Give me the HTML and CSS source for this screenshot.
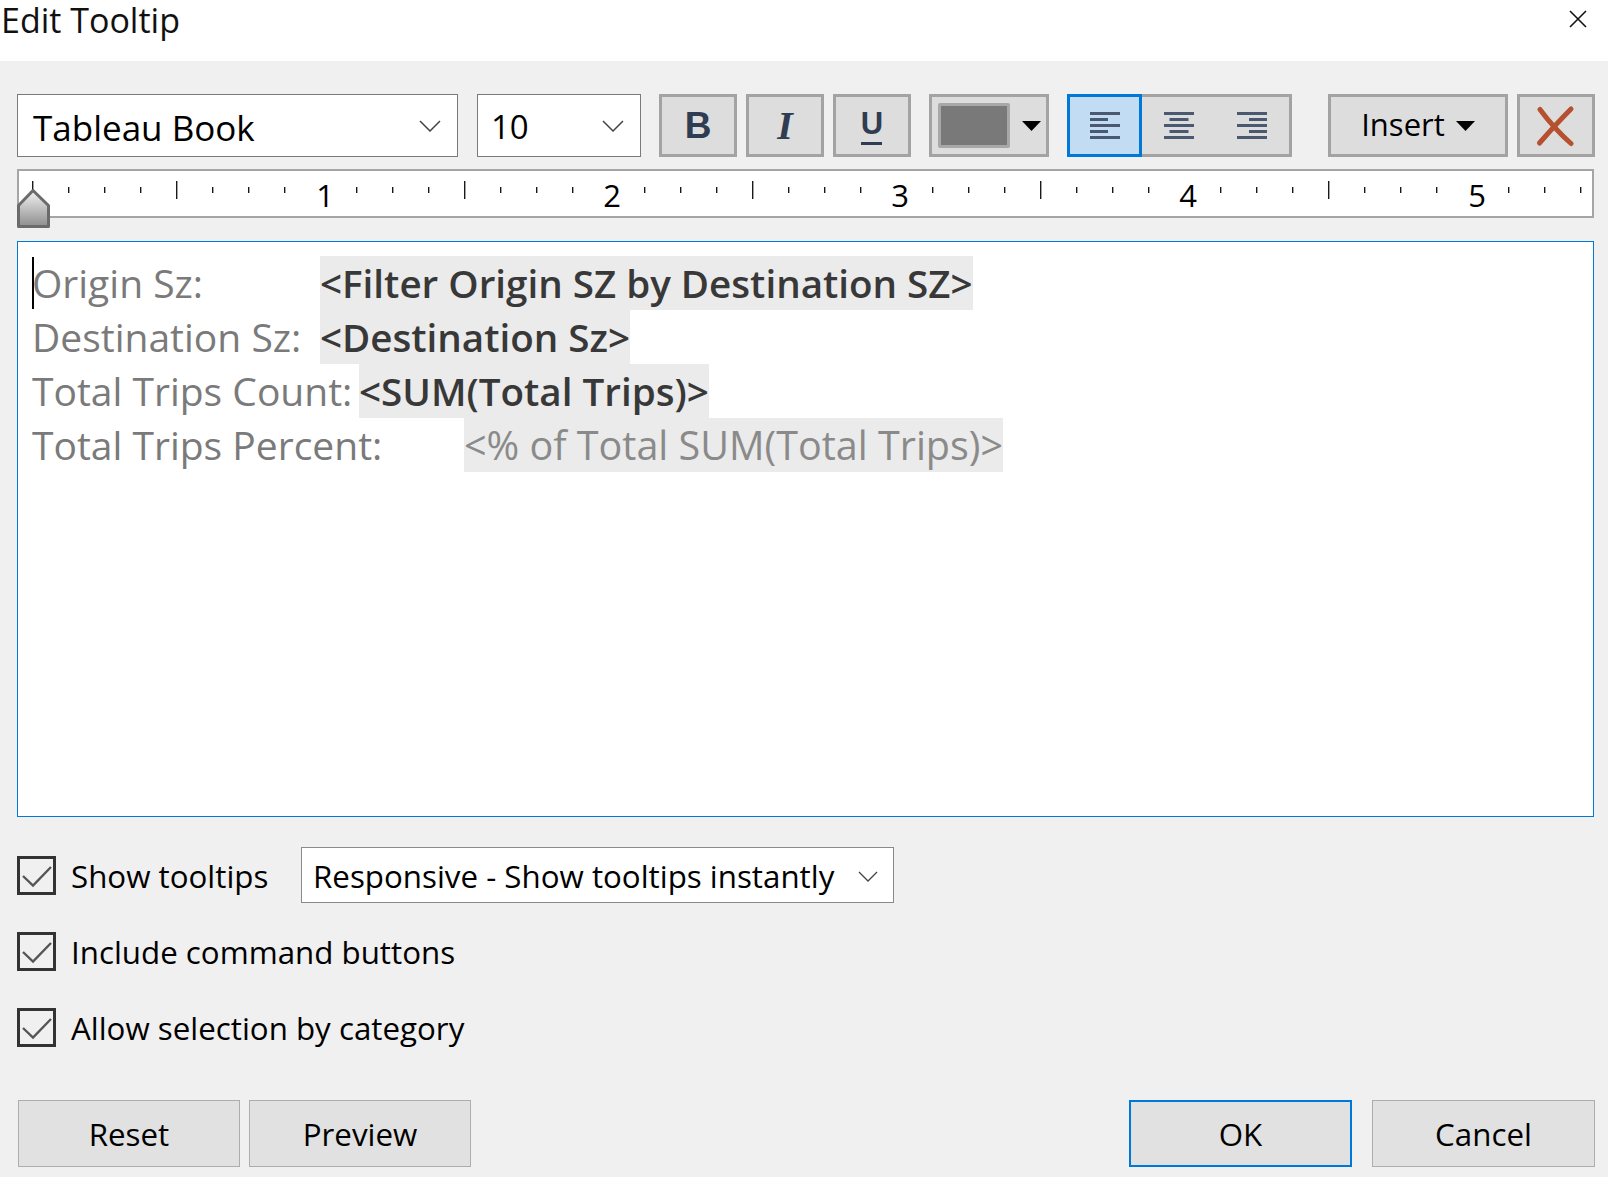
FILE: index.html
```html
<!DOCTYPE html>
<html>
<head>
<meta charset="utf-8">
<title>Edit Tooltip</title>
<link rel="stylesheet" href="styles.css">
</head>
<body>
<div class="titlebar">
  <div class="title">Edit Tooltip</div>
  <svg class="close" width="18" height="18" viewBox="0 0 18 18"><path d="M1 1L17 17M17 1L1 17" stroke="#111" stroke-width="1.6" fill="none"/></svg>
</div>

<div class="main">
  <div class="toolbar">
    <div class="combo font-combo">
      <span class="combo-text">Tableau Book</span>
      <svg class="chev" width="22" height="12" viewBox="0 0 22 12"><path d="M1 1L11 11L21 1" stroke="#444" stroke-width="1.5" fill="none"/></svg>
    </div>
    <div class="combo size-combo">
      <span class="combo-text">10</span>
      <svg class="chev" width="22" height="12" viewBox="0 0 22 12"><path d="M1 1L11 11L21 1" stroke="#444" stroke-width="1.5" fill="none"/></svg>
    </div>
    <div class="tbtn bold-btn"><span class="g-b">B</span></div>
    <div class="tbtn italic-btn"><span class="g-i">I</span></div>
    <div class="tbtn under-btn"><div class="ucol"><span class="g-u">U</span><span class="ubar"></span></div></div>
    <div class="tbtn color-btn">
      <span class="swatch"></span>
      <svg class="tri" width="19" height="10" viewBox="0 0 19 10"><path d="M0 0H19L9.5 10Z" fill="#000"/></svg>
    </div>
    <div class="align-group">
      <div class="seg seg-active">
        <svg width="30" height="27" viewBox="0 0 30 27" fill="#4a5870"><rect x="0" y="0" width="30" height="3"/><rect x="0" y="6" width="18" height="3"/><rect x="0" y="12" width="30" height="3"/><rect x="0" y="18" width="18" height="3"/><rect x="0" y="24" width="30" height="3"/></svg>
      </div>
      <div class="seg-rest">
        <div class="seg">
          <svg width="30" height="27" viewBox="0 0 30 27" fill="#4a5870"><rect x="0" y="0" width="30" height="3"/><rect x="5.5" y="6" width="19" height="3"/><rect x="0" y="12" width="30" height="3"/><rect x="5.5" y="18" width="19" height="3"/><rect x="0" y="24" width="30" height="3"/></svg>
        </div>
        <div class="seg">
          <svg width="30" height="27" viewBox="0 0 30 27" fill="#4a5870"><rect x="0" y="0" width="30" height="3"/><rect x="12" y="6" width="18" height="3"/><rect x="0" y="12" width="30" height="3"/><rect x="12" y="18" width="18" height="3"/><rect x="0" y="24" width="30" height="3"/></svg>
        </div>
      </div>
    </div>
    <div class="tbtn insert-btn">
      <span class="insert-text">Insert</span>
      <svg class="tri" width="19" height="10" viewBox="0 0 19 10"><path d="M0 0H19L9.5 10Z" fill="#000"/></svg>
    </div>
    <div class="tbtn clear-btn">
      <svg width="42" height="42" viewBox="0 0 42 42"><path d="M5 4.5C12 14 23 27 36 38.5" stroke="#b5512f" stroke-width="5" stroke-linecap="round" fill="none"/><path d="M36 4C27 13 15 26 4.5 38" stroke="#b5512f" stroke-width="5" stroke-linecap="round" fill="none"/></svg>
    </div>
  </div>

  <div class="ruler">
    <svg class="ruler-svg" width="1573" height="45" viewBox="19 171 1573 45">
      <g fill="#1a1a1a">
        <rect x="32" y="181" width="1.4" height="18"/>
        <rect x="68" y="187" width="1.4" height="6"/>
        <rect x="104" y="187" width="1.4" height="6"/>
        <rect x="140" y="187" width="1.4" height="6"/>
        <rect x="176" y="181" width="1.4" height="18"/>
        <rect x="212" y="187" width="1.4" height="6"/>
        <rect x="248" y="187" width="1.4" height="6"/>
        <rect x="284" y="187" width="1.4" height="6"/>
        <rect x="356" y="187" width="1.4" height="6"/>
        <rect x="392" y="187" width="1.4" height="6"/>
        <rect x="428" y="187" width="1.4" height="6"/>
        <rect x="464" y="181" width="1.4" height="18"/>
        <rect x="500" y="187" width="1.4" height="6"/>
        <rect x="536" y="187" width="1.4" height="6"/>
        <rect x="572" y="187" width="1.4" height="6"/>
        <rect x="644" y="187" width="1.4" height="6"/>
        <rect x="680" y="187" width="1.4" height="6"/>
        <rect x="716" y="187" width="1.4" height="6"/>
        <rect x="752" y="181" width="1.4" height="18"/>
        <rect x="788" y="187" width="1.4" height="6"/>
        <rect x="824" y="187" width="1.4" height="6"/>
        <rect x="860" y="187" width="1.4" height="6"/>
        <rect x="932" y="187" width="1.4" height="6"/>
        <rect x="968" y="187" width="1.4" height="6"/>
        <rect x="1004" y="187" width="1.4" height="6"/>
        <rect x="1040" y="181" width="1.4" height="18"/>
        <rect x="1076" y="187" width="1.4" height="6"/>
        <rect x="1112" y="187" width="1.4" height="6"/>
        <rect x="1148" y="187" width="1.4" height="6"/>
        <rect x="1220" y="187" width="1.4" height="6"/>
        <rect x="1256" y="187" width="1.4" height="6"/>
        <rect x="1292" y="187" width="1.4" height="6"/>
        <rect x="1328" y="181" width="1.4" height="18"/>
        <rect x="1364" y="187" width="1.4" height="6"/>
        <rect x="1400" y="187" width="1.4" height="6"/>
        <rect x="1436" y="187" width="1.4" height="6"/>
        <rect x="1508" y="187" width="1.4" height="6"/>
        <rect x="1544" y="187" width="1.4" height="6"/>
        <rect x="1580" y="187" width="1.4" height="6"/>
      </g>
      <g class="ruler-num" fill="#000" text-anchor="middle">
        <text x="325" y="207">1</text>
        <text x="612" y="207">2</text>
        <text x="900" y="207">3</text>
        <text x="1188" y="207">4</text>
        <text x="1477" y="207">5</text>
      </g>
    </svg>
    <svg class="indent" width="33" height="39" viewBox="0 0 33 39">
      <defs>
        <linearGradient id="ig" x1="0" y1="0" x2="0" y2="1">
          <stop offset="0" stop-color="#f2f2f2"/>
          <stop offset="1" stop-color="#8e8e8e"/>
        </linearGradient>
      </defs>
      <path d="M16 1.5L31.5 16.5V37.5H1.5V16.5Z" fill="url(#ig)" stroke="#6b6b6b" stroke-width="3" stroke-linejoin="round"/>
    </svg>
  </div>

  <div class="editor">
    <span class="caret"></span>
    <div class="line"><span class="lbl w1">Origin Sz:</span><span class="fld">&lt;Filter Origin SZ by Destination SZ&gt;</span></div>
    <div class="line"><span class="lbl w2">Destination Sz:</span><span class="fld">&lt;Destination Sz&gt;</span></div>
    <div class="line"><span class="lbl w3">Total Trips Count:</span><span class="fld">&lt;SUM(Total Trips)&gt;</span></div>
    <div class="line"><span class="lbl w4">Total Trips Percent:</span><span class="fld fld-light">&lt;% of Total SUM(Total Trips)&gt;</span></div>
  </div>

  <div class="options">
    <div class="opt-row">
      <svg class="cb" width="39" height="39" viewBox="0 0 39 39"><rect x="1.5" y="1.5" width="36" height="36" fill="none" stroke="#333" stroke-width="3"/><path d="M6 20L16 29.5L34 11" fill="none" stroke="#555" stroke-width="2.4"/></svg>
      <span class="opt-label first-label">Show tooltips</span>
      <div class="combo resp-combo">
        <span class="combo-text">Responsive - Show tooltips instantly</span>
        <svg class="chev" width="20" height="11" viewBox="0 0 20 11"><path d="M1 1L10 10L19 1" stroke="#444" stroke-width="1.3" fill="none"/></svg>
      </div>
    </div>
    <div class="opt-row">
      <svg class="cb" width="39" height="39" viewBox="0 0 39 39"><rect x="1.5" y="1.5" width="36" height="36" fill="none" stroke="#333" stroke-width="3"/><path d="M6 20L16 29.5L34 11" fill="none" stroke="#555" stroke-width="2.4"/></svg>
      <span class="opt-label">Include command buttons</span>
    </div>
    <div class="opt-row">
      <svg class="cb" width="39" height="39" viewBox="0 0 39 39"><rect x="1.5" y="1.5" width="36" height="36" fill="none" stroke="#333" stroke-width="3"/><path d="M6 20L16 29.5L34 11" fill="none" stroke="#555" stroke-width="2.4"/></svg>
      <span class="opt-label">Allow selection by category</span>
    </div>
  </div>

  <div class="footer">
    <div class="btn-group">
      <div class="dbtn">Reset</div>
      <div class="dbtn">Preview</div>
    </div>
    <div class="btn-group right-group">
      <div class="dbtn dbtn-default">OK</div>
      <div class="dbtn">Cancel</div>
    </div>
  </div>
</div>
</body>
</html>
```

FILE: styles.css
```css
html, body {
  margin: 0;
  padding: 0;
}
body {
  width: 1608px;
  height: 1177px;
  overflow: hidden;
  background: #f0f0f0;
  font-family: "Open Sans", "Noto Sans", sans-serif;
  color: #000;
}

/* title bar */
.titlebar {
  height: 61px;
  background: #fff;
  display: flex;
  justify-content: space-between;
  align-items: flex-start;
}
.title {
  font-size: 34px;
  line-height: 40px;
  padding-left: 1px;
  color: #111;
}
.close {
  margin-top: 10px;
  margin-right: 21px;
}

.main {
  padding-left: 17px;
  width: 1578px;
}

/* toolbar */
.toolbar {
  margin-top: 33px;
  height: 63px;
  display: flex;
}
.combo {
  box-sizing: border-box;
  background: #fff;
  border: 1px solid #7a7a7a;
  display: flex;
  align-items: center;
  justify-content: space-between;
}
.combo-text {
  font-size: 35px;
  line-height: 40px;
  color: #000;
}
.font-combo {
  width: 441px;
  height: 63px;
  padding: 4px 16px 0 15px;
}
.font-combo .chev {
  margin-top: -4px;
}
.size-combo {
  width: 164px;
  height: 63px;
  margin-left: 19px;
  padding: 2px 16px 0 13px;
}
.size-combo .chev {
  margin-top: -2px;
}
.size-combo .combo-text {
  font-size: 33px;
}
.tbtn {
  box-sizing: border-box;
  height: 63px;
  background: #dddddd;
  border: 3px solid #a3a3a3;
  display: flex;
  align-items: center;
  justify-content: center;
  flex: none;
}
.bold-btn { width: 78px; margin-left: 18px; }
.italic-btn { width: 78px; margin-left: 9px; }
.under-btn { width: 78px; margin-left: 9px; }
.g-b {
  font-family: "Liberation Sans", Arial, sans-serif;
  font-weight: bold;
  font-size: 37px;
  line-height: 27px;
  color: #2f3c52;
}
.g-i {
  font-family: "Liberation Serif", "Times New Roman", serif;
  font-weight: bold;
  font-style: italic;
  font-size: 40px;
  line-height: 27px;
  color: #2f3c52;
}
.ucol {
  display: flex;
  flex-direction: column;
  align-items: center;
  padding-top: 6px;
}
.g-u {
  font-family: "Liberation Sans", Arial, sans-serif;
  font-weight: bold;
  font-size: 31px;
  line-height: 23px;
  color: #2f3c52;
}
.ubar {
  width: 21px;
  height: 3px;
  margin-top: 7px;
  background: #2f3c52;
}
.color-btn {
  width: 120px;
  margin-left: 18px;
  justify-content: flex-start;
  padding-left: 6px;
}
.swatch {
  box-sizing: border-box;
  width: 72px;
  height: 45px;
  background: #797979;
  border: 3px solid #a8a8a8;
  border-radius: 2px;
}
.color-btn .tri {
  margin-left: 12px;
}

.align-group {
  margin-left: 18px;
  display: flex;
  height: 63px;
}
.seg {
  box-sizing: border-box;
  display: flex;
  align-items: center;
  justify-content: center;
}
.seg-active {
  width: 75px;
  height: 63px;
  background: #c1dcf3;
  border: 3px solid #0078d7;
}
.seg-rest {
  box-sizing: border-box;
  width: 150px;
  height: 63px;
  display: flex;
  background: #dddddd;
  border: 3px solid #a3a3a3;
  border-left: none;
}
.seg-rest .seg {
  flex: 1;
}

.insert-btn {
  width: 180px;
  margin-left: 36px;
  gap: 11px;
}
.insert-text {
  font-size: 31px;
  line-height: 40px;
  margin-top: -4px;
}
.clear-btn {
  width: 78px;
  margin-left: 9px;
}

/* ruler */
.ruler {
  position: relative;
  margin-top: 12px;
  box-sizing: border-box;
  width: 1577px;
  height: 49px;
  background: #fff;
  border: 2px solid #a5a5a5;
}
.ruler-svg {
  display: block;
}
.ruler-num {
  font-family: "Open Sans", "Noto Sans", sans-serif;
  font-size: 31px;
}
.indent {
  position: absolute;
  left: -2px;
  top: 18px;
}

/* editor */
.editor {
  position: relative;
  margin-top: 23px;
  box-sizing: border-box;
  width: 1577px;
  height: 576px;
  background: #fff;
  border: 1px solid #0078d7;
  padding: 14px 0 0 14px;
  font-size: 39px;
}
.caret {
  position: absolute;
  left: 14px;
  top: 15px;
  width: 2px;
  height: 52px;
  background: #000;
}
.line {
  height: 54px;
  line-height: 54px;
  white-space: nowrap;
}
.lbl {
  display: inline-block;
  color: #7a7a7a;
  vertical-align: top;
}
.w1 { width: 288px; }
.w2 { width: 288px; }
.w3 { width: 327px; }
.w4 { width: 432px; }
.fld {
  display: inline-block;
  vertical-align: top;
  height: 54px;
  background: #ebebeb;
  color: #383838;
  font-weight: 600;
  font-size: 38.6px;
}
.fld-light {
  color: #8a8a8a;
  font-weight: 400;
  font-size: 39.5px;
}

/* options */
.options {
  margin-top: 30px;
  display: flex;
  flex-direction: column;
  gap: 20px;
}
.opt-row {
  height: 56px;
  display: flex;
  align-items: center;
}
.cb {
  flex: none;
  margin-right: 15px;
}
.opt-label {
  font-size: 31.3px;
  line-height: 40px;
  margin-top: 2px;
  white-space: nowrap;
}
.first-label {
  width: 230px;
}
.resp-combo {
  width: 593px;
  height: 56px;
  padding: 2px 15px 0 11px;
  border-color: #8a8a8a;
}
.resp-combo .combo-text {
  font-size: 31.3px;
}

/* footer */
.footer {
  margin-top: 45px;
  display: flex;
  justify-content: space-between;
  padding-left: 1px;
}
.btn-group {
  display: flex;
  gap: 9px;
}
.right-group {
  gap: 20px;
}
.dbtn {
  box-sizing: border-box;
  width: 222px;
  height: 67px;
  background: #e1e1e1;
  border: 1px solid #adadad;
  display: flex;
  align-items: center;
  justify-content: center;
  font-size: 31.3px;
  padding-bottom: 0;
}
.right-group .dbtn {
  width: 223px;
}
.dbtn-default {
  border: 2px solid #0078d7;
}
```
